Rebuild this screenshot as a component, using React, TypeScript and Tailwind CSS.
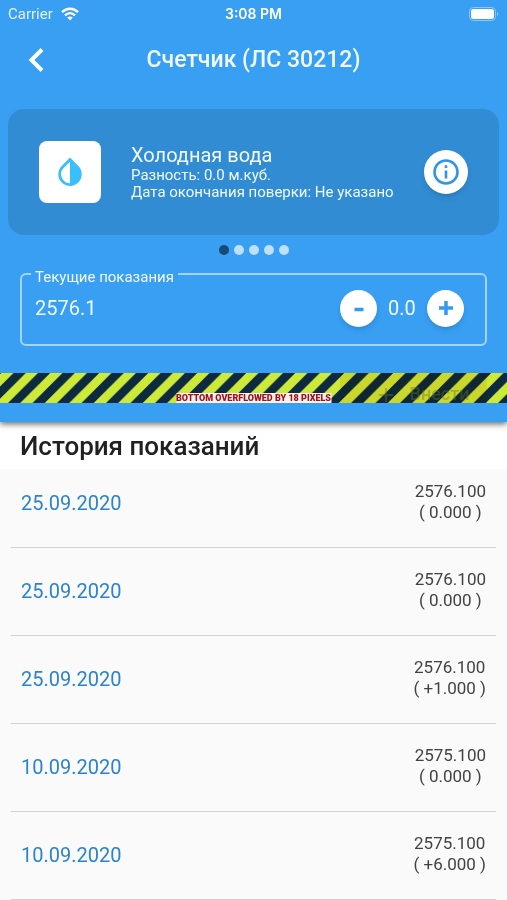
import React, { useState } from 'react';

type Reading = { id: number; date: string; value: string; diff: string };

const HISTORY: Reading[] = [
  { id: 1, date: '25.09.2020', value: '2576.100', diff: '( 0.000 )' },
  { id: 2, date: '25.09.2020', value: '2576.100', diff: '( 0.000 )' },
  { id: 3, date: '25.09.2020', value: '2576.100', diff: '( +1.000 )' },
  { id: 4, date: '10.09.2020', value: '2575.100', diff: '( 0.000 )' },
  { id: 5, date: '10.09.2020', value: '2575.100', diff: '( +6.000 )' },
];

const StatusBar = () => (
  <div className="grid grid-cols-3 items-center h-7 px-2 text-[15px] text-white">
    <div className="flex items-center gap-2 text-[#dff0ff]">
      <span>Carrier</span>
      <svg viewBox="0 0 18 14" className="w-[18px] h-[14px]" fill="none" stroke="white" strokeWidth="2.4">
        <path d="M1 5.2C5.6 .6 12.4.6 17 5.2" />
        <path d="M4 8.3c3-2.9 7-2.9 10 0" />
        <path d="M6.3 10.6c1.6-1.5 3.8-1.5 5.4 0L9 13.4z" fill="white" stroke="none" />
      </svg>
    </div>
    <span className="text-center text-sm font-semibold font-[Inter,sans-serif]">3:08 PM</span>
    <svg viewBox="0 0 30 14" className="w-[30px] h-[14px] justify-self-end">
      <rect x="0.5" y="0.5" width="26" height="13" rx="4" fill="none" stroke="#8cc8fb" />
      <rect x="2" y="2" width="23" height="10" rx="2.5" fill="white" />
      <path d="M28 5v4c1.8-.7 1.8-3.3 0-4z" fill="#8cc8fb" />
    </svg>
  </div>
);

const MeterCard = () => (
  <section className="flex items-center mx-2 h-[126px] px-[31px] rounded-2xl bg-[#328cd3] text-[#f0faff]">
    <div className="flex items-center justify-center shrink-0 w-[62px] h-[62px] rounded-lg bg-white">
      <svg viewBox="0 0 24 30" className="w-6 h-[30px]">
        <path d="M12 .6 3.7 9a11.7 11.7 0 1 0 16.6 0z" fill="#39bffb" />
        <path d="M12 4.8v21.5a9 9 0 0 1-6.4-15.2z" fill="white" />
      </svg>
    </div>
    <div className="flex-1 ml-[30px] text-[15px] leading-[17px]">
      <h2 className="text-xl leading-6">Холодная вода</h2>
      <p>Разность: 0.0 м.куб.</p>
      <p className="whitespace-nowrap">Дата окончания поверки: Не указано</p>
    </div>
    <button
      type="button"
      aria-label="Информация"
      className="flex items-center justify-center shrink-0 w-11 h-11 rounded-full bg-white shadow-md"
    >
      <svg viewBox="0 0 26 26" className="w-[26px] h-[26px]" fill="none" stroke="#3194e8" strokeWidth="2.6">
        <circle cx="13" cy="13" r="11.5" />
        <path d="M13 11.5v8M13 6.3v2.7" />
      </svg>
    </button>
  </section>
);

const PageDots = () => (
  <div className="flex justify-center gap-[5px] mt-[10px]">
    {[0, 1, 2, 3, 4].map((i) => (
      <span key={i} className={`w-[10px] h-[10px] rounded-full ${i === 0 ? 'bg-[#164b75]' : 'bg-[#bfe0fb]'}`} />
    ))}
  </div>
);

const CurrentReading = () => {
  const [value, setValue] = useState('2576.1');
  const [delta, setDelta] = useState(0);

  return (
    <fieldset className="mx-5 mt-[6px] h-[85px] px-[9px] border-2 border-[#a5d4fb] rounded-md">
      <legend className="px-1 pt-[6px] text-[15px] leading-5 text-[#f0faff]">
        <label htmlFor="reading">Текущие показания</label>
      </legend>
      <div className="flex items-center h-[42px] px-1">
        <input
          id="reading"
          value={value}
          onChange={(e) => setValue(e.target.value)}
          className="flex-1 min-w-0 bg-transparent text-xl text-[#f0faff] outline-none"
        />
        <button
          type="button"
          aria-label="Уменьшить"
          onClick={() => setDelta(delta - 0.1)}
          className="flex items-center justify-center w-[37px] h-[37px] rounded-full bg-white shadow-md"
        >
          <svg viewBox="0 0 16 16" className="w-4 h-4">
            <path d="M3.5 9.5h9" stroke="#319af2" strokeWidth="3.5" />
          </svg>
        </button>
        <output className="w-[50px] text-center text-xl text-[#f0faff]">{delta.toFixed(1)}</output>
        <button
          type="button"
          aria-label="Увеличить"
          onClick={() => setDelta(delta + 0.1)}
          className="flex items-center justify-center w-[37px] h-[37px] mr-2 rounded-full bg-white shadow-md"
        >
          <svg viewBox="0 0 16 16" className="w-4 h-4">
            <path d="M1 8h14M8 1v14" stroke="#319af2" strokeWidth="3.5" />
          </svg>
        </button>
      </div>
    </fieldset>
  );
};

// striped debug band that covers the submit button
const OverflowBand = () => (
  <div className="relative mt-[27px] h-[30px]">
    <svg className="block w-full h-full" aria-hidden="true">
      <defs>
        <pattern id="stripes" width="24.5" height="30" patternUnits="userSpaceOnUse">
          <rect width="24.5" height="30" fill="#cdea38" />
          <path
            d="M-11 0h12.25l-30 30h-12.25zM13.5 0h12.25l-30 30h-12.25zM38 0h12.25l-30 30h-12.25z"
            fill="#0e2a40"
          />
        </pattern>
      </defs>
      <rect width="100%" height="100%" fill="url(#stripes)" />
    </svg>
    <div className="absolute inset-y-0 right-5 w-[147px] bg-[#fcecc4] mix-blend-multiply" />
    <button
      type="button"
      className="absolute inset-y-0 right-5 flex items-end justify-center gap-4 w-[147px] pl-5 text-lg leading-[18px] font-medium text-[#6a7230]/40"
    >
      <svg viewBox="0 0 16 16" className="w-4 h-4" stroke="currentColor" strokeWidth="2">
        <path d="M1 8h14M8 1v14" />
      </svg>
      <span>Внести</span>
    </button>
    <p className="absolute bottom-0 left-1/2 -translate-x-1/2 bg-[#fdf3f0] text-[9px] leading-[10px] font-black text-[#a3101c] whitespace-nowrap">
      BOTTOM OVERFLOWED BY 18 PIXELS
    </p>
  </div>
);

const ReadingRow = ({ reading }: { reading: Reading }) => (
  <li className="flex justify-between h-[88px] first:h-[79px] mx-[11px] px-[10px] pt-[21px] first:pt-3 border-b border-[#d2d2d2]">
    <span className="pt-2 text-xl leading-7 text-[#2c83cd]">{reading.date}</span>
    <div className="text-[17px] leading-[21px] text-center text-[#424242]">
      <p>{reading.value}</p>
      <p>{reading.diff}</p>
    </div>
  </li>
);

const App: React.FC = () => (
  <main className="min-h-screen bg-[#fafafa] font-[Roboto,sans-serif]">
    <div className="relative pb-[19px] bg-[#389ff3] shadow-[0_2px_6px_rgba(0,0,0,0.6)]">
      <StatusBar />
      <header className="grid grid-cols-[72px_1fr_72px] items-center h-16 mb-[17px]">
        <button type="button" aria-label="Назад" className="justify-self-start ml-7">
          <svg viewBox="0 0 16 24" className="w-4 h-6" fill="none" stroke="white" strokeWidth="4">
            <path d="M14 1.5 3.5 12 14 22.5" />
          </svg>
        </button>
        <h1 className="text-center text-[23px] font-medium text-[#f0faff]">Счетчик (ЛС 30212)</h1>
      </header>
      <MeterCard />
      <PageDots />
      <CurrentReading />
      <OverflowBand />
    </div>
    <h2 className="h-[47px] px-5 pt-2 bg-white text-[26px] leading-8 font-medium text-[#212121]">История показаний</h2>
    <ul>
      {HISTORY.map((reading) => (
        <ReadingRow key={reading.id} reading={reading} />
      ))}
    </ul>
  </main>
);

export default App;
